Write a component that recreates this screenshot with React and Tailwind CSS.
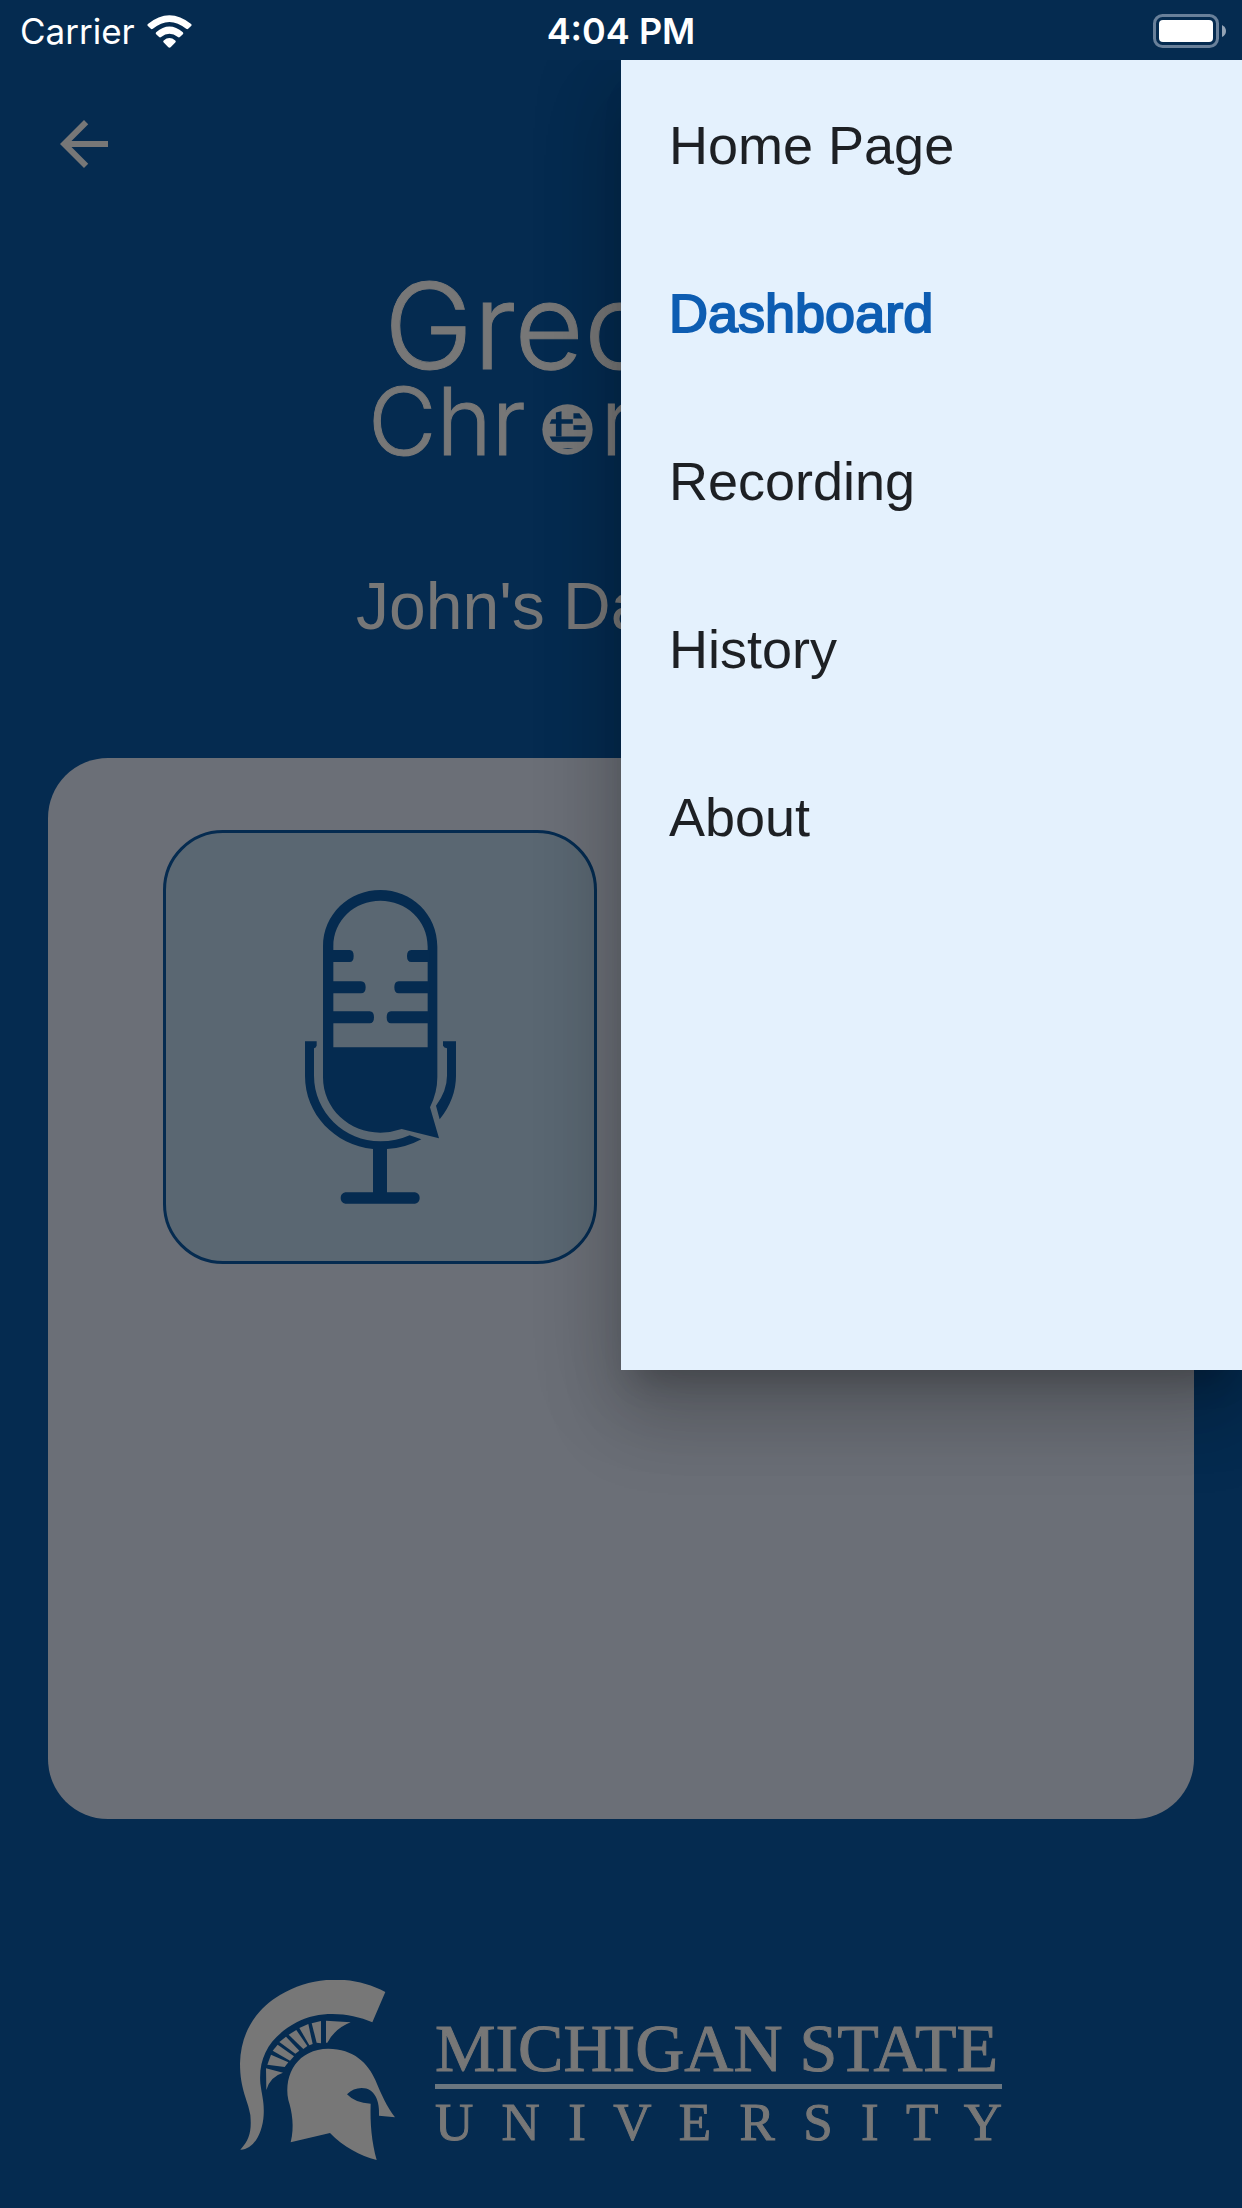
import { useState } from "react";

const MENU_ITEMS = ["Home Page", "Dashboard", "Recording", "History", "About"];

function WifiIcon() {
    return (
        <svg viewBox="0 0 135 100" className="w-[45px] h-[33px]" fill="currentColor" aria-hidden="true">
            <path d="M2 27 Q67 -26 133 27 Q136 30 133 33 L124 42 Q121 44 118 42 Q67 0 17 42 Q14 44 11 42 L2 33 Q-1 30 2 27Z" />
            <path d="M27 52 Q67 18 108 52 Q111 55 108 58 L99 67 Q96 70 93 67 Q67 47 42 67 Q39 70 36 67 L27 58 Q24 55 27 52Z" />
            <path d="M50 77 Q67 62 85 77 Q88 80 85 83 L71 98 Q67 101 64 98 L50 83 Q47 80 50 77Z" />
        </svg>
    );
}

function BatteryIcon() {
    return (
        <svg viewBox="0 0 73 34" className="w-[73px] h-[34px]" aria-label="Battery full">
            <rect x="1.5" y="1.5" width="63" height="31" rx="8" fill="none" stroke="#69809a" strokeWidth="3" />
            <rect x="6" y="6" width="54" height="22" rx="4" fill="#fff" />
            <path d="M69 11 Q73 13 73 17 Q73 21 69 23Z" fill="#93a3b5" />
        </svg>
    );
}

function StatusBar() {
    return (
        <div className="grid grid-cols-3 items-center h-[60px] px-4 pt-0.5 text-white font-[Inter,sans-serif] text-[35px] leading-[58px]">
            <div className="flex items-center gap-3 pl-1">
                <span>Carrier</span>
                <WifiIcon />
            </div>
            <span className="text-center text-[36px] font-semibold whitespace-nowrap">4:04 PM</span>
            <div className="flex justify-end">
                <BatteryIcon />
            </div>
        </div>
    );
}

function BackArrowIcon() {
    return (
        <svg viewBox="0 0 24 24" className="size-[72px]" fill="currentColor" aria-hidden="true">
            <path d="M20 11H7.83l5.59-5.59L12 4l-8 8 8 8 1.41-1.41L7.83 13H20v-2z" />
        </svg>
    );
}

function FlagIcon() {
    return (
        <svg viewBox="0 0 152 154" className="inline-block w-[51px] h-[51px] ml-4 mr-2" aria-label="o">
            <circle cx="76" cy="77" r="76" fill="#777777" />
            <g fill="#052b50">
                <path d="M41 26L58 22V46H92V60H58V98H41V60H22L28 46H41Z" />
                <path d="M94 28H112L122 44H94Z" />
                <path d="M94 64H131V78H94Z" />
                <path d="M22 98H131L124 114H30Z" />
                <path d="M60 133H94Q77 138 60 133Z" />
            </g>
        </svg>
    );
}

function MicIcon() {
    return (
        <svg viewBox="72 88 453 942" className="w-[151px] h-[314px]" fill="#052b50" aria-hidden="true">
            <path
                fillRule="evenodd"
                d="M126 258C126 160 205 88 298 88S469 160 469 258V650Q469 696 447 740L474 833L362 805Q330 816 298 816C205 816 126 745 126 650ZM157 258V560H440V258C440 178 375 120 298 120S157 178 157 258Z"
            />
            <path d="M150 268H206Q218 268 218 286T206 304H150ZM150 362H240Q254 362 254 380T240 398H150ZM150 452H266Q279 452 279 470T266 488H150Z" />
            <path d="M446 268H391Q378 268 378 286T391 304H446ZM446 362H353Q340 362 340 380T353 398H446ZM446 452H330Q317 452 317 470T330 488H446Z" />
            <path d="M72 542H107V555Q105 561 99 563V645C99 754 190 842 298 842Q346 842 386 824L421 836Q374 862 318 865V995H402Q416 998 416 1012T402 1029H193Q179 1026 179 1012T193 995H276V865C160 852 72 760 72 645Z" />
            <path d="M486 542H525V645Q525 714 476 776L465 735Q498 690 498 645V563Q489 561 486 555Z" />
        </svg>
    );
}

function SpartanIcon() {
    return (
        <svg viewBox="60 60 465 540" className="w-[155px] h-[180px] shrink-0" fill="#777777" aria-hidden="true">
            <path d="M496 96L457 187C390 158 300 150 230 187C150 230 115 290 121 370C126 410 133 425 131 465C128 520 100 570 61 569C90 540 95 510 91 465C84 420 60 390 60 310C62 220 105 150 180 105C280 45 400 45 496 96Z" />
            <path
                fillRule="evenodd"
                d="M212 547C224 500 216 455 205 420C190 340 235 267 325 266C400 266 445 310 466 360C485 405 500 440 525 472L477 467C480 425 465 384 425 384Q400 384 381 403Q405 429 452 431C450 490 455 545 470 600C420 588 370 560 330 519Z"
            />
            <path d="M318 182L392 187Q345 205 322 248H318Z" />
            <path d="M275 190L303 183V250L290 248Z" />
            <path d="M238 204L265 192L278 252L268 256Z" />
            <path d="M206 224L229 210L262 258L250 267Z" />
            <path d="M178 246L198 230L238 272L226 281Z" />
            <path d="M158 272L173 254L222 289L210 302Z" />
            <path d="M142 314L153 284L205 307L194 321Z" />
            <path d="M138 325L189 338Q150 350 139 390Z" />
        </svg>
    );
}

function AppLogo() {
    return (
        <div className="pt-12 pl-[384px] text-[#777777] font-[Inter,sans-serif] font-light whitespace-nowrap [-webkit-text-stroke:1px_#777777]">
            <div className="text-[120px] leading-[100px]">Grecian</div>
            <div className="-ml-4 text-[94px] leading-[90px]">
                Chr
                <FlagIcon />
                nicle
            </div>
        </div>
    );
}

function Footer() {
    return (
        <footer className="flex items-start justify-center gap-10 pt-[161px] pb-12">
            <SpartanIcon />
            <div className="w-[567px] pt-8 text-[#777777] font-['Liberation_Serif',serif] [-webkit-text-stroke:1px_#777777]">
                <div className="text-[68px] leading-[72px] whitespace-nowrap">MICHIGAN STATE</div>
                <div className="h-[5px] bg-[#6a7680]" />
                <div className="text-[53px] leading-[66px] whitespace-nowrap [text-align-last:justify]">
                    U N I V E R S I T Y
                </div>
            </div>
        </footer>
    );
}

function Drawer({ active, onSelect }) {
    return (
        <nav className="w-1/2 h-[61%] pt-px bg-[#e4f1fd] shadow-[0_24px_30px_-15px_rgba(0,0,0,0.2),0_48px_72px_6px_rgba(0,0,0,0.14),0_18px_80px_12px_rgba(0,0,0,0.12)]">
            {MENU_ITEMS.map((item) => (
                <button
                    key={item}
                    onClick={() => onSelect(item)}
                    className={
                        item === active
                            ? "block w-full h-[168px] px-12 text-left text-[54px] text-[#0d5db2] [-webkit-text-stroke:2px_#0d5db2]"
                            : "block w-full h-[168px] px-12 text-left text-[54px] text-[#1d2024]"
                    }
                >
                    {item}
                </button>
            ))}
        </nav>
    );
}

export default function App() {
    const [active, setActive] = useState("Dashboard");

    return (
        <div className="relative flex flex-col min-h-screen bg-[#052b50] font-['Liberation_Sans',sans-serif]">
            <StatusBar />

            <header className="p-12 text-[#777777]">
                <button aria-label="Back" className="block">
                    <BackArrowIcon />
                </button>
            </header>

            <AppLogo />

            <h1 className="pt-[102px] pb-[114px] text-center text-[66px] leading-[76px] text-[#777777]">
                John's Dashboard
            </h1>

            <main className="flex-1 mx-12 px-[115px] py-[72px] rounded-[60px] bg-[#6b6f77]">
                <div className="grid grid-cols-2 gap-12">
                    <button
                        aria-label="Record"
                        className="flex items-center justify-center aspect-square rounded-[60px] border-3 border-[#052b50] bg-[#5a6772]"
                    >
                        <MicIcon />
                    </button>
                </div>
            </main>

            <Footer />

            {/* drawer sits over the page, below the status bar */}
            <div className="absolute inset-x-0 bottom-0 top-[60px] flex justify-end overflow-hidden">
                <Drawer active={active} onSelect={setActive} />
            </div>
        </div>
    );
}
